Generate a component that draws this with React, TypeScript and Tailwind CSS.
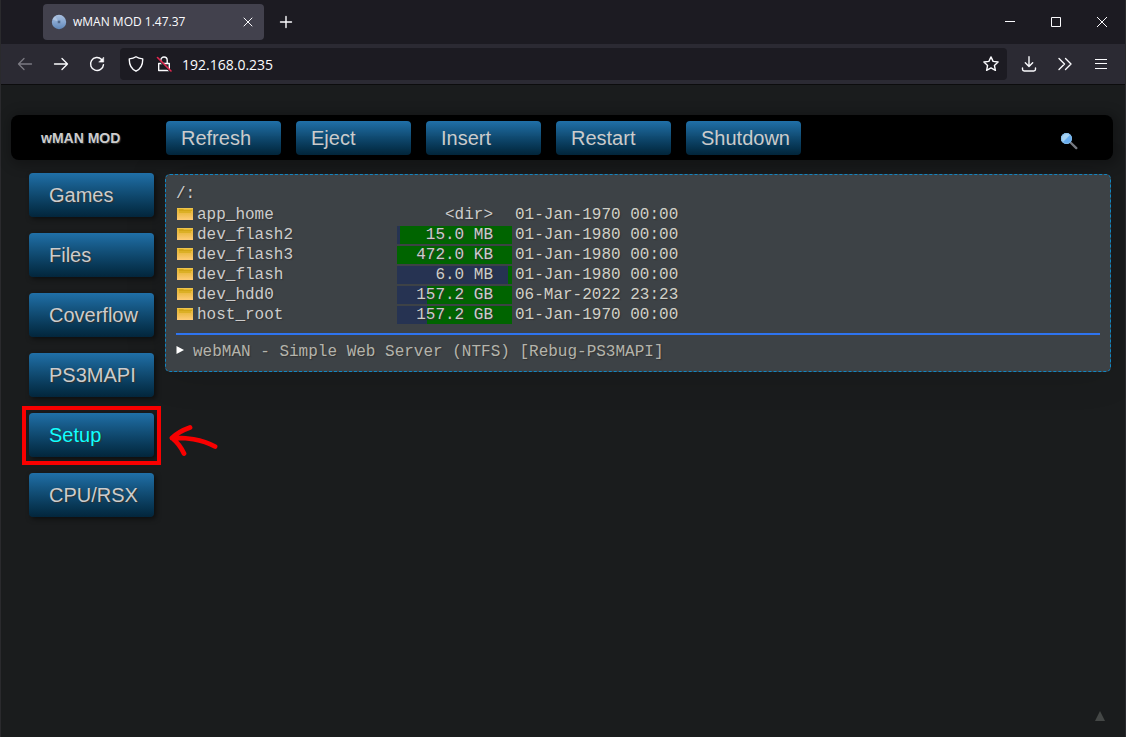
import React from "react";

const actions = ["Refresh", "Eject", "Insert", "Restart", "Shutdown"];
const sections = ["Games", "Files", "Coverflow", "PS3MAPI", "Setup", "CPU/RSX"];

type Entry = { name: string; size: string; date: string; used?: number };

const entries: Entry[] = [
  { name: "app_home", size: "<dir>", date: "01-Jan-1970 00:00" },
  { name: "dev_flash2", size: "15.0 MB", date: "01-Jan-1980 00:00", used: 2.5 },
  { name: "dev_flash3", size: "472.0 KB", date: "01-Jan-1980 00:00", used: 0 },
  { name: "dev_flash", size: "6.0 MB", date: "01-Jan-1980 00:00", used: 96.5 },
  { name: "dev_hdd0", size: "157.2 GB", date: "06-Mar-2022 23:23", used: 26 },
  { name: "host_root", size: "157.2 GB", date: "01-Jan-1970 00:00", used: 26 },
];

type IconProps = { className?: string; children: React.ReactNode; width?: number };

function Icon({ className = "", children, width = 1.3 }: IconProps) {
  return (
    <svg
      viewBox="0 0 16 16"
      className={`size-4 shrink-0 ${className}`}
      fill="none"
      stroke="currentColor"
      strokeWidth={width}
      strokeLinecap="round"
      strokeLinejoin="round"
      aria-hidden="true"
    >
      {children}
    </svg>
  );
}

function IconButton({ label, children, className = "w-9" }: { label: string; children: React.ReactNode; className?: string }) {
  return (
    <button type="button" aria-label={label} className={`flex h-8 shrink-0 items-center justify-center ${className}`}>
      {children}
    </button>
  );
}

function TabStrip() {
  return (
    <header className="flex h-11 items-center bg-[#1c1b22] text-[#fbfbfe]">
      <div className="ml-[42px] flex h-9 w-[221px] items-center rounded-[4px] bg-[#42414d] pl-2">
        <svg viewBox="0 0 16 16" className="size-4" aria-hidden="true">
          <defs>
            <linearGradient id="disc" x1="0" y1="0" x2="0" y2="1">
              <stop offset="0" stopColor="#a9bfdf" />
              <stop offset="0.5" stopColor="#86a6d0" />
              <stop offset="1" stopColor="#5f86b8" />
            </linearGradient>
          </defs>
          <circle cx="8" cy="8" r="7.2" fill="url(#disc)" />
          <path d="M8 8L1.5 5.5A7 7 0 0 1 4 2.3z" fill="#c6d6ec" opacity=".5" />
          <circle cx="8" cy="8" r="2" fill="#7390b8" />
          <circle cx="8" cy="8" r=".8" fill="#26344c" />
        </svg>
        <span className="ml-1.5 flex-1 text-xs whitespace-nowrap">wMAN MOD 1.47.37</span>
        <button type="button" aria-label="Close tab" className="flex size-8 items-center justify-center">
          <Icon width={1}>
            <path d="M4 4l8 8M12 4l-8 8" />
          </Icon>
        </button>
      </div>
      <IconButton label="New tab" className="ml-1 w-9">
        <Icon width={1.4}>
          <path d="M8 2.5v11M2.5 8h11" />
        </Icon>
      </IconButton>
      <div className="ml-auto flex">
        <button type="button" aria-label="Minimize" className="flex h-11 w-[46px] items-center justify-center">
          <svg viewBox="0 0 10 10" className="size-2.5" stroke="currentColor" fill="none"><path d="M0 4.5h10" /></svg>
        </button>
        <button type="button" aria-label="Maximize" className="flex h-11 w-[46px] items-center justify-center">
          <svg viewBox="0 0 10 10" className="size-2.5" stroke="currentColor" fill="none"><path d="M.5.5h9v9h-9z" /></svg>
        </button>
        <button type="button" aria-label="Close window" className="flex h-11 w-[46px] items-center justify-center">
          <svg viewBox="0 0 10 10" className="size-2.5" stroke="currentColor" fill="none"><path d="M0 0l10 10M10 0L0 10" /></svg>
        </button>
      </div>
    </header>
  );
}

function Toolbar() {
  return (
    <div className="flex h-[41px] items-center border-b border-[#0c0c0d] bg-[#2b2a33] px-1.5 text-[#fbfbfe]">
      <IconButton label="Back" className="w-9 text-[#7b7a82]">
        <Icon><path d="M14.5 8H1.5M7 2.5L1.5 8 7 13.5" /></Icon>
      </IconButton>
      <IconButton label="Forward">
        <Icon><path d="M1.5 8h13M9 2.5L14.5 8 9 13.5" /></Icon>
      </IconButton>
      <IconButton label="Reload">
        <Icon width={1.4}>
          <path d="M12.6 3.4A6.5 6.5 0 1 0 14.5 8.600" />
          <path d="M14.700 1.500v4.600h-4.600z" fill="currentColor" strokeWidth=".6" />
        </Icon>
      </IconButton>
      <div className="ml-[5px] flex h-8 flex-1 items-center rounded-[4px] bg-[#1c1b22]">
        <button type="button" aria-label="Tracking protection" className="flex size-8 items-center justify-center">
          <Icon width={1.4}><path d="M8 .8c2 1.4 4.2 1.9 6.7 2.1.2 5-1.2 9.6-6.7 12.3C2.500 12.500 1.100 7.900 1.300 2.900 3.800 2.700 6 2.200 8 .8z" /></Icon>
        </button>
        <button type="button" aria-label="Connection is not secure" className="flex h-8 w-6 items-center justify-center">
          <Icon width={1.4}>
            <path d="M2.700 7.500h10.600v7H2.700zM4.800 7.200V4.200a3.200 3.200 0 0 1 6.400 0v3" />
            <path d="M1 2.200l13 13" stroke="#1c1b22" strokeWidth="1.500" />
            <path d="M1.500 1.500l13.500 13.500" stroke="#e22850" strokeWidth="1.600" />
          </Icon>
        </button>
        <input
          aria-label="Address"
          defaultValue="192.168.0.235"
          className="h-8 min-w-0 flex-1 bg-transparent pl-1.5 text-sm outline-none"
        />
        <IconButton label="Bookmark" className="w-8">
          <Icon width={1.4}>
            <path d="M8 .9l2.100 4.500 5 .6-3.700 3.400 1 4.900L8 11.900l-4.400 2.400 1-4.900L.9 6l5-.6z" />
          </Icon>
        </IconButton>
      </div>
      <IconButton label="Downloads" className="ml-1 w-9">
        <Icon width={1.4}><path d="M8 .8v9.500M4.300 6.700L8 10.400l3.700-3.700M1.500 12v1.300c0 1 .7 1.700 1.700 1.700h9.600c1 0 1.700-.7 1.700-1.700V12" /></Icon>
      </IconButton>
      <IconButton label="More tools">
        <Icon width={1.4}><path d="M2 2.500L7.500 8 2 13.500M8.500 2.500L14 8l-5.500 5.500" /></Icon>
      </IconButton>
      <IconButton label="Application menu">
        <svg viewBox="0 0 16 16" className="size-4" stroke="currentColor" fill="none"><path d="M2 3.500h12M2 7.500h12M2 12.500h12" strokeWidth="1.200" /></svg>
      </IconButton>
    </div>
  );
}

function Folder() {
  return (
    <svg viewBox="0 0 16 12" className="mb-0.5 h-3 w-4 shrink-0" aria-hidden="true">
      <defs>
        <linearGradient id="folder" x1="0" y1="0" x2="0" y2="1">
          <stop offset="0" stopColor="#e2b62c" />
          <stop offset="0.5" stopColor="#edbc4c" />
          <stop offset="1" stopColor="#ffcc78" />
        </linearGradient>
      </defs>
      <path d="M0 0h16v12H0z" fill="url(#folder)" />
      <path d="M2 1h4l1 1h8v1H2z" fill="#d3a618" />
      <path d="M2 3h12v2H2z" fill="#dcb026" />
      <path d="M0 0h16v1H0z" fill="#efc44c" />
    </svg>
  );
}

function Magnifier() {
  return (
    <svg viewBox="0 0 18 18" className="size-[18px]" aria-hidden="true">
      <path d="M10.500 10.500l5.800 5.600" stroke="#777a82" strokeWidth="2.400" strokeLinecap="round" />
      <circle cx="6.500" cy="6.500" r="5.500" fill="#69aef0" />
      <path d="M2.600 10.400A5.500 5.500 0 0 1 10.400 2.600z" fill="#a8d4f4" />
      <circle cx="6.500" cy="6.500" r="5" fill="none" stroke="#86bdea" />
    </svg>
  );
}

function FileTable() {
  return (
    <table className="border-separate border-spacing-x-0 border-spacing-y-[2px] text-base leading-[18px]">
      <tbody>
        {entries.map((e) => (
          <tr key={e.name}>
            <td className="w-[221px] p-0">
              <a href={`#${e.name}`} className="flex h-[18px] items-center gap-1 pl-px">
                <Folder />
                {e.name}
              </a>
            </td>
            <td
              className="w-[115px] p-0 pr-[19px] text-right whitespace-nowrap"
              style={
                e.used === undefined
                  ? undefined
                  : { background: `linear-gradient(to right, #263352 ${e.used}%, #006400 ${e.used}%)` }
              }
            >
              {e.size}
            </td>
            <td className="p-0 pl-[3px] whitespace-nowrap text-[#d0d0c8]">{e.date}</td>
          </tr>
        ))}
      </tbody>
    </table>
  );
}

const gradient = "bg-linear-to-b from-[#2070a8] to-[#03263c]";

export default function App() {
  return (
    <div className="flex min-h-screen flex-col border-x border-[#2a2a2d] bg-[#1a1c1d] font-['Open_Sans',sans-serif]">
      <TabStrip />
      <Toolbar />
      <main className="flex flex-1 flex-col pt-[30px] pr-3 pl-2.5 font-['Liberation_Sans',Arial,sans-serif] text-[#ccc] [text-shadow:1px_1px_1px_#333]">
        <nav className="flex h-[45px] items-center rounded-lg bg-black pr-[35px] pl-[30px] shadow-[2px_2px_12px_4px_rgba(0,0,0,0.25)]">
          <h1 className="w-[125px] text-sm font-bold">wMAN MOD</h1>
          <div className="flex gap-[15px]">
            {actions.map((a) => (
              <button
                key={a}
                type="button"
                className={`h-[34px] w-[115px] rounded-[4px] pl-[15px] text-left text-xl ${gradient}`}
              >
                {a}
              </button>
            ))}
          </div>
          <button type="button" aria-label="Search" className="ml-auto pt-1.5">
            <Magnifier />
          </button>
        </nav>

        <div className="flex items-start gap-[11px] pt-[13px] pl-[18px]">
          <aside className="flex w-[125px] shrink-0 flex-col gap-4">
            {sections.map((s) => (
              <div key={s} className="relative">
                <a
                  href={`#${s}`}
                  className={`flex h-11 items-center rounded-[4px] pl-5 text-xl shadow-[2px_2px_5px_rgba(0,0,0,0.5)] ${gradient} ${
                    s === "Setup" ? "text-[#1ff]" : ""
                  }`}
                >
                  {s}
                </a>
                {s === "Setup" && (
                  <>
                    <div className="pointer-events-none absolute -inset-x-[7px] -top-[7px] -bottom-2 border-4 border-[#f90000]" />
                    <svg
                      viewBox="0 0 50 36"
                      className="pointer-events-none absolute top-[10px] left-[139px] h-9 w-[50px]"
                      fill="none"
                      stroke="#f90000"
                      strokeWidth="4.800"
                      strokeLinecap="round"
                      strokeLinejoin="round"
                      aria-hidden="true"
                    >
                      <path d="M22 4.500C15 7 9 10 4 15c5 4 9 9 12 15.500M4 15c13-1 30 1.500 43 8.500" />
                    </svg>
                  </>
                )}
              </div>
            ))}
          </aside>

          <section className="mt-px mr-0.5 min-w-0 flex-1 rounded-[5px] border border-dashed border-[#0f86c4] bg-[#3d4246] px-2.5 pt-2.5 pb-2.5 font-['Liberation_Mono','Courier_New',monospace] shadow-[0_0_40px_rgba(0,0,0,0.15)]">
            <p className="pb-px text-base leading-[18px]">/:</p>
            <FileTable />
            <hr className="mt-[7px] border-t-2 border-[#2e74f0]" />
            <details className="pt-2 text-base leading-[18px] text-[#b4b4ac]">
              <summary className="flex cursor-pointer list-none items-center gap-[9px]">
                <svg viewBox="0 0 8 8" className="mb-1 size-2" aria-hidden="true">
                  <path d="M.5 0L8 4 .5 8z" fill="#fff" />
                </svg>
                webMAN - Simple Web Server (NTFS) [Rebug-PS3MAPI]
              </summary>
            </details>
          </section>
        </div>

        <a href="#top" aria-label="Back to top" className="mt-auto mr-2 mb-4 self-end">
          <svg viewBox="0 0 10 10" className="size-2.5" aria-hidden="true">
            <path d="M5 0l5 10H0z" fill="#444746" />
          </svg>
        </a>
      </main>
    </div>
  );
}
